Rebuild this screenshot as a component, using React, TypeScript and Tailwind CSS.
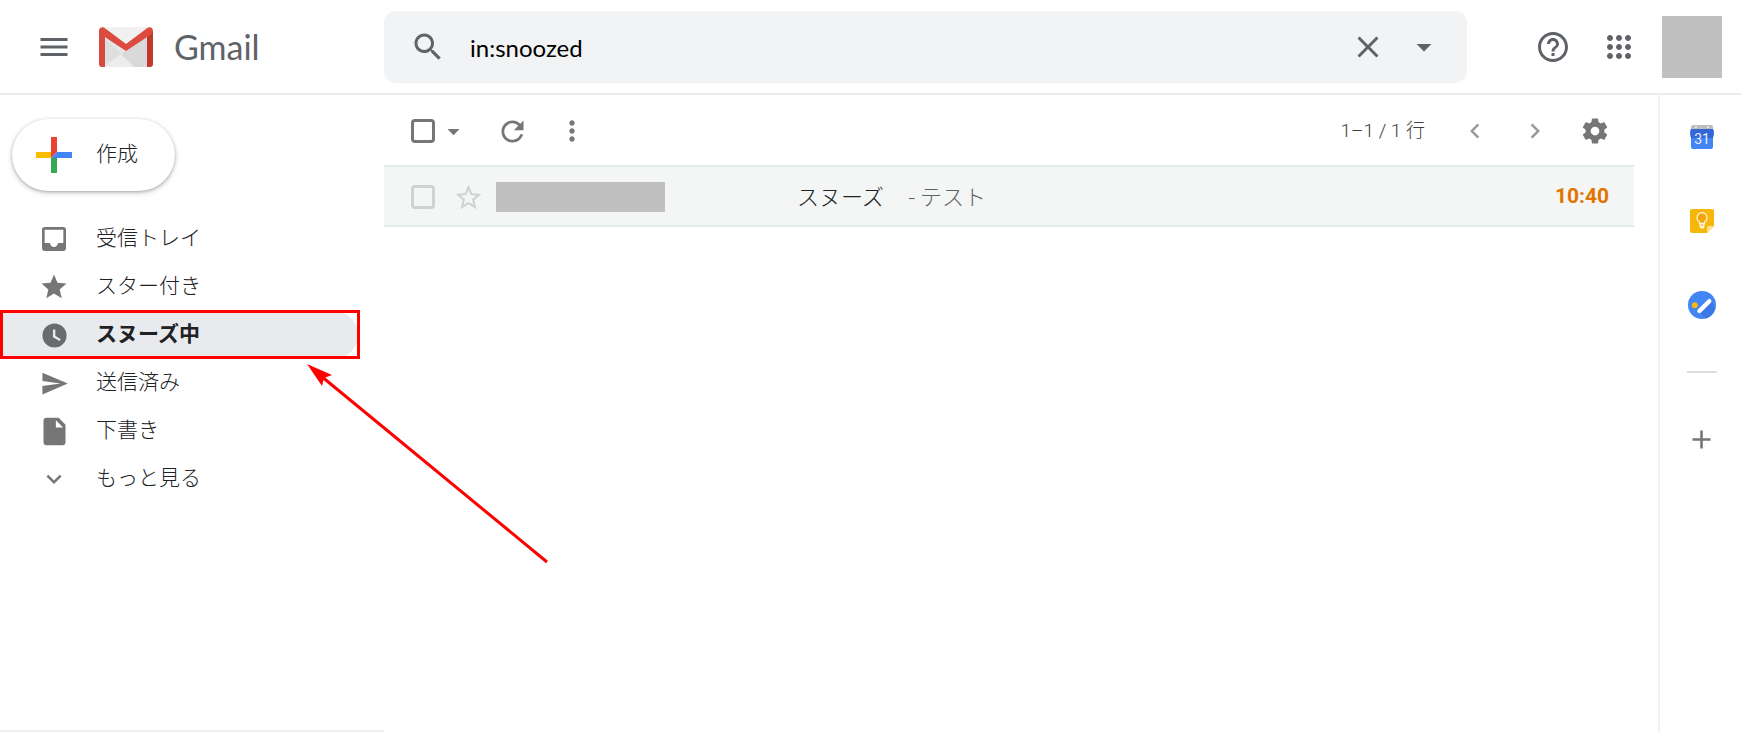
import { useState, type ReactNode } from "react";

type IconProps = {
    d: string;
    size?: number;
    className?: string;
};

function Icon({ d, size = 36, className = "" }: IconProps) {
    return (
        <svg width={size} height={size} viewBox="0 0 24 24" fill="currentColor" className={`shrink-0 ${className}`} aria-hidden="true">
            <path d={d} />
        </svg>
    );
}

const paths = {
    menu: "M3 18h18v-2H3v2zm0-5h18v-2H3v2zm0-7v2h18V6H3z",
    search: "M15.5 14h-.79l-.28-.27C15.41 12.59 16 11.11 16 9.5 16 5.91 13.09 3 9.5 3S3 5.91 3 9.5 5.91 16 9.5 16c1.61 0 3.09-.59 4.23-1.57l.27.28v.79l5 4.99L20.49 19l-4.99-5zm-6 0C7.01 14 5 11.99 5 9.5S7.01 5 9.5 5 14 7.01 14 9.5 11.99 14 9.5 14z",
    close: "M19 6.41L17.59 5 12 10.59 6.41 5 5 6.41 10.59 12 5 17.59 6.41 19 12 13.41 17.59 19 19 17.59 13.41 12z",
    dropdown: "M7 10l5 5 5-5z",
    help: "M11 18h2v-2h-2v2zm1-16C6.48 2 2 6.48 2 12s4.48 10 10 10 10-4.48 10-10S17.52 2 12 2zm0 18c-4.41 0-8-3.59-8-8s3.59-8 8-8 8 3.59 8 8-3.59 8-8 8zm0-14c-2.21 0-4 1.79-4 4h2c0-1.1.9-2 2-2s2 .9 2 2c0 2-3 1.75-3 5h2c0-2.25 3-2.5 3-5 0-2.21-1.79-4-4-4z",
    apps: "M6 8c1.1 0 2-.9 2-2s-.9-2-2-2-2 .9-2 2 .9 2 2 2zm6 12c1.1 0 2-.9 2-2s-.9-2-2-2-2 .9-2 2 .9 2 2 2zm-6 0c1.1 0 2-.9 2-2s-.9-2-2-2-2 .9-2 2 .9 2 2 2zm0-6c1.1 0 2-.9 2-2s-.9-2-2-2-2 .9-2 2 .9 2 2 2zm6 0c1.1 0 2-.9 2-2s-.9-2-2-2-2 .9-2 2 .9 2 2 2zm4-8c0 1.1.9 2 2 2s2-.9 2-2-.9-2-2-2-2 .9-2 2zm-4 2c1.1 0 2-.9 2-2s-.9-2-2-2-2 .9-2 2 .9 2 2 2zm6 6c1.1 0 2-.9 2-2s-.9-2-2-2-2 .9-2 2 .9 2 2 2zm0 6c1.1 0 2-.9 2-2s-.9-2-2-2-2 .9-2 2 .9 2 2 2z",
    inbox: "M19 3H4.99c-1.11 0-1.98.89-1.98 2L3 19c0 1.1.88 2 1.99 2H19c1.1 0 2-.9 2-2V5c0-1.11-.9-2-2-2zm0 12h-4c0 1.66-1.35 3-3 3s-3-1.34-3-3H4.99V5H19v10z",
    star: "M12 17.27L18.18 21l-1.64-7.03L22 9.24l-7.19-.61L12 2 9.19 8.63 2 9.24l5.46 4.73L5.82 21z",
    starOutline: "M22 9.24l-7.19-.62L12 2 9.19 8.63 2 9.24l5.46 4.73L5.82 21 12 17.27 18.18 21l-1.63-7.03L22 9.24zM12 15.4l-3.76 2.27 1-4.28-3.32-2.88 4.38-.38L12 6.1l1.71 4.04 4.38.38-3.32 2.88 1 4.28L12 15.4z",
    clock: "M12 2a10 10 0 1 0 0 20 10 10 0 0 0 0-20zm4.200 14.600L10.700 13.400V7h2v5.300l4.500 2.700-1 1.600z",
    send: "M2.01 21L23 12 2.01 3 2 10l15 2-15 2z",
    draft: "M6 2c-1.1 0-2 .9-2 2v16c0 1.1.9 2 2 2h12c1.1 0 2-.9 2-2V7l-5-5H6zm7 7V3.8L18.2 9H13z",
    more: "M16.59 8.59L12 13.17 7.41 8.59 6 10l6 6 6-6z",
    refresh: "M17.65 6.35C16.2 4.9 14.21 4 12 4c-4.42 0-7.99 3.58-7.99 8s3.57 8 7.99 8c3.73 0 6.84-2.55 7.73-6h-2.08c-.82 2.33-3.04 4-5.65 4-3.31 0-6-2.69-6-6s2.69-6 6-6c1.66 0 3.14.69 4.22 1.78L13 11h7V4l-2.35 2.35z",
    dots: "M12 8c1.1 0 2-.9 2-2s-.9-2-2-2-2 .9-2 2 .9 2 2 2zm0 2c-1.1 0-2 .9-2 2s.9 2 2 2 2-.9 2-2-.9-2-2-2zm0 6c-1.1 0-2 .9-2 2s.9 2 2 2 2-.9 2-2-.9-2-2-2z",
    prev: "M15.41 7.41L14 6l-6 6 6 6 1.41-1.41L10.83 12z",
    next: "M10 6L8.59 7.41 13.17 12l-4.58 4.59L10 18l6-6z",
    settings: "M19.43 12.98c.04-.32.07-.64.07-.98s-.03-.66-.07-.98l2.11-1.65c.19-.15.24-.42.12-.64l-2-3.46c-.12-.22-.39-.3-.61-.22l-2.49 1c-.52-.4-1.08-.73-1.69-.98l-.38-2.65C14.46 2.18 14.25 2 14 2h-4c-.25 0-.46.18-.49.42l-.38 2.65c-.61.25-1.17.59-1.69.98l-2.49-1c-.23-.09-.49 0-.61.22l-2 3.46c-.13.22-.07.49.12.64l2.11 1.65c-.04.32-.07.65-.07.98s.03.66.07.98l-2.11 1.65c-.19.15-.24.42-.12.64l2 3.46c.12.22.39.3.61.22l2.49-1c.52.4 1.08.73 1.69.98l.38 2.65c.03.24.24.42.49.42h4c.25 0 .46-.18.49-.42l.38-2.65c.61-.25 1.17-.59 1.69-.98l2.49 1c.23.09.49 0 .61-.22l2-3.46c.12-.22.07-.49-.12-.64l-2.11-1.65zM12 15.5c-1.93 0-3.5-1.57-3.5-3.5s1.57-3.5 3.5-3.5 3.5 1.57 3.5 3.5-1.57 3.5-3.5 3.5z",
    plus: "M19 13h-6v6h-2v-6H5v-2h6V5h2v6h6v2z",
};

const navItems = [
    { label: "受信トレイ", d: paths.inbox, size: 32 },
    { label: "スター付き", d: paths.star, size: 30 },
    { label: "スヌーズ中", d: paths.clock, size: 29, active: true },
    { label: "送信済み", d: paths.send, size: 29 },
    { label: "下書き", d: paths.draft, size: 33 },
    { label: "もっと見る", d: paths.more, size: 30 },
];

function GmailLogo() {
    return (
        <svg width="54" height="40" viewBox="0 0 54 40" className="shrink-0" aria-hidden="true">
            <rect x="2" width="50" height="40" rx="2" fill="#e6e6e6" />
            <path d="M4 0h46L27 17z" fill="#f1f1f1" />
            <path d="M6 12l16 15L6 38z" fill="#dedede" />
            <path d="M22 27l5-3L48 10v30H35z" fill="#d9d9d9" />
            <path d="M6 39l16-12 13 13H6z" fill="#ececec" />
            <path d="M0 3v34a3 3 0 0 0 3 3h3V9z" fill="#d54b3d" />
            <path d="M54 3v34a3 3 0 0 1-3 3h-3V9z" fill="#c0392b" />
            <path d="M0 4C0 1 3-1 6 1.300L27 17 48 1.300C51-1 54 1 54 4c0 1.500-.6 2.500-2 3.500L27 24 2 7.500C.6 6.500 0 5.500 0 4z" fill="#dd4b3e" />
        </svg>
    );
}

function CalendarIcon() {
    return (
        <svg width="24" height="24" viewBox="0 0 24 24" aria-hidden="true">
            <path d="M1 6V2a2 2 0 0 1 2-2h18a2 2 0 0 1 2 2v4z" fill="#bdbdbd" />
            <circle cx="6" cy="2" r="1" fill="#eee" />
            <circle cx="18" cy="2" r="1" fill="#eee" />
            <path d="M1 4h22c1 3 1 5 0 8v10a2 2 0 0 1-2 2H3a2 2 0 0 1-2-2V12C0 9 0 7 1 4z" fill="#4285f4" />
            <path d="M1 4h22c1 3 1 5 0 9H1C0 9 0 7 1 4z" fill="#3367d6" />
            <text x="12" y="19" textAnchor="middle" fontSize="14" fontWeight="400" fill="#e8f0fe" fontFamily="Roboto, sans-serif">31</text>
        </svg>
    );
}

function KeepIcon() {
    return (
        <svg width="24" height="24" viewBox="0 0 24 24" aria-hidden="true">
            <path d="M2 0h20a2 2 0 0 1 2 2v15l-7 7H2a2 2 0 0 1-2-2V2a2 2 0 0 1 2-2z" fill="#f7b60b" />
            <path d="M24 17l-7 7v-5a2 2 0 0 1 2-2z" fill="#fde293" />
            <path d="M9.500 14.500v-1.500a5 5 0 1 1 5 0v1.500z" fill="#f2a60c" stroke="#fff3d0" strokeWidth="1.300" />
            <path d="M9.500 14h5v3.500L13.500 19.500h-3l-1-2z" fill="#fff3d0" />
            <path d="M10.800 16h2.400" stroke="#f2a60c" />
        </svg>
    );
}

function TasksIcon() {
    return (
        <svg width="28" height="28" viewBox="0 0 28 28" aria-hidden="true">
            <circle cx="14" cy="14" r="14" fill="#4285f4" />
            <path d="M12 22.500l11.500-13 3.500 8.500a14 14 0 0 1-9 9.500z" fill="#3b78e7" />
            <circle cx="6.800" cy="14.300" r="3" fill="#fbb50c" />
            <path d="M11.500 20L21.300 10.200" stroke="#fff" strokeWidth="4.400" strokeLinecap="round" />
        </svg>
    );
}

type IconButtonProps = {
    label: string;
    className?: string;
    children: ReactNode;
};

function IconButton({ label, className = "", children }: IconButtonProps) {
    return (
        <button type="button" aria-label={label} className={`flex size-9 shrink-0 items-center justify-center ${className}`}>
            {children}
        </button>
    );
}

function Header() {
    const [query, setQuery] = useState("in:snoozed");

    return (
        <header className="flex h-[95px] shrink-0 items-center border-b-2 border-[#eaeef3] pt-px text-[#5f6368]">
            <div className="flex w-96 shrink-0 items-center pl-9">
                <IconButton label="メインメニュー"><Icon d={paths.menu} /></IconButton>
                <a href="#" className="ml-[27px] flex items-center gap-[21px]">
                    <GmailLogo />
                    <span className="font-[Lato,sans-serif] text-[34px] leading-10 font-normal">Gmail</span>
                </a>
            </div>

            <form role="search" className="flex h-[72px] min-w-0 flex-1 items-center rounded-xl bg-[#f1f3f4] pr-[25px] pl-[26px]" onSubmit={(e) => e.preventDefault()}>
                <IconButton label="検索"><Icon d={paths.search} /></IconButton>
                <input
                    type="text"
                    aria-label="メールを検索"
                    value={query}
                    onChange={(e) => setQuery(e.target.value)}
                    className="mx-6 min-w-0 flex-1 bg-transparent pt-0.5 font-[Lato,sans-serif] text-2xl font-normal text-black outline-none"
                />
                <IconButton label="検索をクリア"><Icon d={paths.close} /></IconButton>
                <IconButton label="検索オプション" className="ml-5"><Icon d={paths.dropdown} /></IconButton>
            </form>

            <div className="flex w-[274px] shrink-0 items-center justify-end pr-[19px]">
                <IconButton label="サポート"><Icon d={paths.help} /></IconButton>
                <IconButton label="アプリ" className="ml-[30px]"><Icon d={paths.apps} /></IconButton>
                <div className="ml-[25px] h-[62px] w-[60px] bg-[#c0c0c0]" />
            </div>
        </header>
    );
}

function Sidebar() {
    return (
        <aside className="flex w-96 shrink-0 flex-col border-b-2 border-[#eeeeee]">
            <button type="button" className="mt-6 ml-3 flex h-[72px] w-[163px] items-center gap-6 rounded-full pl-6 text-[21px] text-[#202124] shadow-[0_1px_3px_rgba(60,64,67,0.35),0_2px_5px_1px_rgba(60,64,67,0.15)]">
                <svg width="36" height="36" viewBox="0 0 36 36" aria-hidden="true">
                    <path d="M15 0h6v15l-6 6z" fill="#ea4335" />
                    <path d="M0 15h15v6H0z" fill="#fbbc04" />
                    <path d="M15 21h6v15h-6z" fill="#34a853" />
                    <path d="M21 15h15v6H15z" fill="#4285f4" />
                </svg>
                <span className="pb-1">作成</span>
            </button>

            <nav className="mt-6">
                <ul>
                    {navItems.map((item) => (
                        <li key={item.label} className="relative">
                            <a
                                href="#"
                                aria-current={item.active ? "page" : undefined}
                                className={`flex h-12 w-[358px] items-center gap-6 rounded-r-full pl-9 text-[21px] text-[#202124] ${item.active ? "bg-[#e8eaed] font-bold" : ""}`}
                            >
                                <span className={`flex w-9 justify-center ${item.active ? "text-[#6a6b6d]" : "text-[#767676]"}`}>
                                    <Icon d={item.d} size={item.size} />
                                </span>
                                <span className="pb-1">{item.label}</span>
                            </a>
                            {item.active && <Callout />}
                        </li>
                    ))}
                </ul>
            </nav>
        </aside>
    );
}

/* Red frame and arrow over the selected folder */
function Callout() {
    return (
        <>
            <div className="pointer-events-none absolute -top-px bottom-0 left-0 z-10 w-[360px] border-3 border-[#ff0000]" />
            <svg width="242" height="200" viewBox="0 0 242 200" className="pointer-events-none absolute top-[53px] left-[307px] z-10" aria-hidden="true">
                <path d="M14 12L240 198" stroke="#ff0000" strokeWidth="3" />
                <path d="M0 0l25 11-8 3-2 8z" fill="#ff0000" />
            </svg>
        </>
    );
}

function MailList() {
    return (
        <main className="min-w-0 flex-1 pr-6">
            <div className="flex h-[70px] items-center pt-0.5 pl-[27px] text-[#767676]">
                <input type="checkbox" aria-label="すべて選択" className="size-6 shrink-0 appearance-none rounded-sm border-3 border-[#767676]" />
                <IconButton label="選択"><Icon d={paths.dropdown} size={29} /></IconButton>
                <IconButton label="更新" className="ml-[23px]"><Icon d={paths.refresh} size={33} /></IconButton>
                <IconButton label="その他" className="ml-6"><Icon d={paths.dots} size={32} /></IconButton>
                <span className="ml-auto font-[Roboto,'Noto_Sans_CJK_JP',sans-serif] text-[19px] text-[#3c4043]">1–1 / 1 行</span>
                <IconButton label="前へ" className="ml-8 text-[#9a9a9a]"><Icon d={paths.prev} size={30} /></IconButton>
                <IconButton label="次へ" className="ml-6 text-[#9a9a9a]"><Icon d={paths.next} size={30} /></IconButton>
                <IconButton label="設定" className="mr-[21px] ml-6"><Icon d={paths.settings} size={30} /></IconButton>
            </div>

            <ul>
                <li className="flex h-[62px] items-center border-y-2 border-[#e6ebf0] bg-[#f4f6f6] pt-0.5 pr-[25px] pl-[27px] text-[22px]">
                    <input type="checkbox" aria-label="メールを選択" className="size-6 shrink-0 appearance-none rounded-sm border-3 border-[#d0d1d1]" />
                    <IconButton label="スターを付ける" className="ml-[15px] text-[#d0d1d1]"><Icon d={paths.starOutline} size={31} /></IconButton>
                    <div className="ml-2.5 h-[30px] w-[169px] shrink-0 bg-[#c0c0c0]" />
                    <a href="#" className="ml-[132px] flex min-w-0 flex-1 gap-6 pb-1 whitespace-nowrap">
                        <span className="text-[#202124]">スヌーズ</span>
                        <span className="text-[#5f6368]">- テスト</span>
                    </a>
                    <time className="font-[Roboto,sans-serif] text-[21px] font-bold text-[#e37400]">10:40</time>
                </li>
            </ul>
        </main>
    );
}

function SidePanel() {
    const addons = [
        { label: "カレンダー", icon: <CalendarIcon /> },
        { label: "Keep", icon: <KeepIcon /> },
        { label: "ToDo リスト", icon: <TasksIcon /> },
    ];

    return (
        <aside className="flex w-[83px] shrink-0 flex-col items-center border-l-2 border-[#f1f1f1] pl-0.5">
            {addons.map((addon) => (
                <button key={addon.label} type="button" aria-label={addon.label} className="flex h-[84px] w-full items-center justify-center">
                    {addon.icon}
                </button>
            ))}
            <hr className="mt-6 w-[30px] border-t-2 border-[#dadce0]" />
            <button type="button" aria-label="アドオンを取得" className="mt-6 flex h-[84px] w-full items-center justify-center text-[#767676]">
                <Icon d={paths.plus} size={31} />
            </button>
        </aside>
    );
}

export default function App() {
    return (
        <div className="flex min-h-screen flex-col bg-white font-['Noto_Sans_CJK_JP',sans-serif] font-light">
            <Header />
            <div className="flex flex-1">
                <Sidebar />
                <MailList />
                <SidePanel />
            </div>
        </div>
    );
}
